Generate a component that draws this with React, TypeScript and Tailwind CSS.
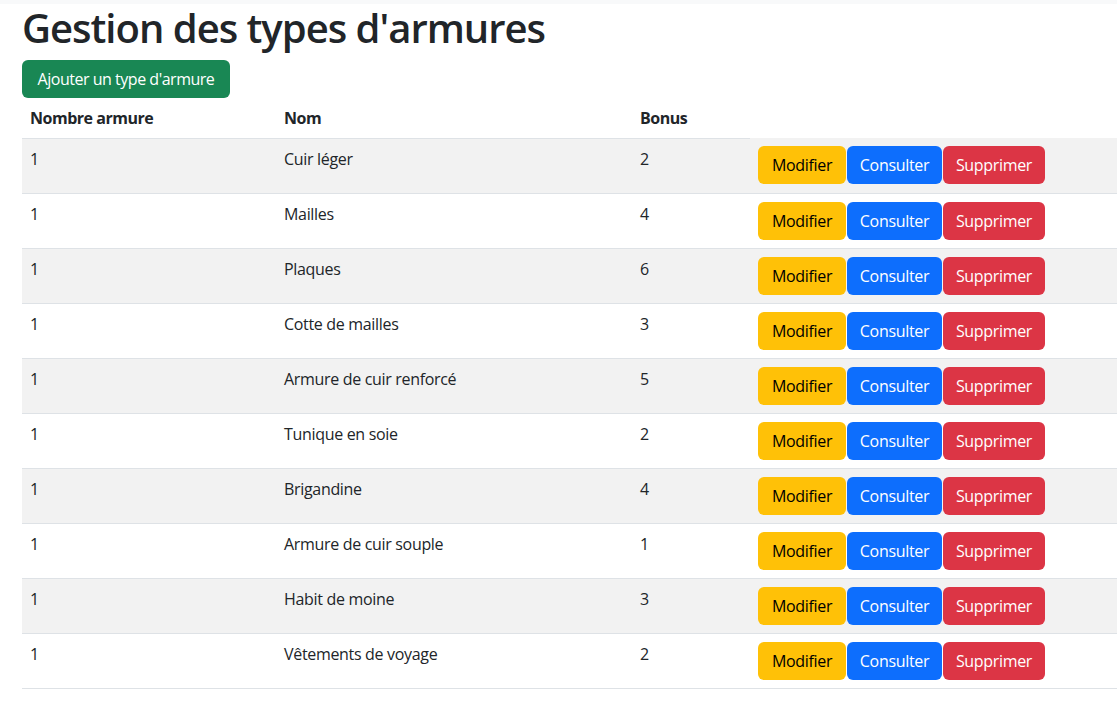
const rows = [
  { count: 1, name: 'Cuir léger', bonus: 2 },
  { count: 1, name: 'Mailles', bonus: 4 },
  { count: 1, name: 'Plaques', bonus: 6 },
  { count: 1, name: 'Cotte de mailles', bonus: 3 },
  { count: 1, name: 'Armure de cuir renforcé', bonus: 5 },
  { count: 1, name: 'Tunique en soie', bonus: 2 },
  { count: 1, name: 'Brigandine', bonus: 4 },
  { count: 1, name: 'Armure de cuir souple', bonus: 1 },
  { count: 1, name: 'Habit de moine', bonus: 3 },
  { count: 1, name: 'Vêtements de voyage', bonus: 2 },
]

export default function App() {
  return (
    <div className="min-h-screen bg-white font-['Open_Sans','Lato',sans-serif] text-base tracking-[-0.02em] text-[#212529]">
      <div className="h-1 bg-[#f8f9fa]" />
      <div className="pl-[22px]">
        <h1 className="mb-2 text-[40px] font-semibold leading-[48px] tracking-[-0.025em]">
          Gestion des types d'armures
        </h1>
        <button className="h-[38px] w-[208px] rounded-md bg-[#198754] tracking-[-0.03em] text-white">
          Ajouter un type d'armure
        </button>
        <table className="w-[1095px] table-fixed border-collapse text-left">
          <colgroup>
            <col className="w-[254px]" />
            <col className="w-[356px]" />
            <col className="w-[118px]" />
            <col className="w-[367px]" />
          </colgroup>
          <thead>
            <tr>
              <th className="h-10 border-b border-[#dee2e6] px-2 font-bold tracking-[-0.03em]">Nombre armure</th>
              <th className="h-10 border-b border-[#dee2e6] px-2 font-bold tracking-[-0.03em]">Nom</th>
              <th className="h-10 border-b border-[#dee2e6] px-2 font-bold tracking-[-0.03em]">Bonus</th>
            </tr>
          </thead>
          <tbody>
            {rows.map((r, i) => (
              <tr
                key={r.name}
                className={i % 2 === 0 ? 'bg-[#f2f2f2]' : 'bg-white'}
              >
                <td className="h-[55px] border-b border-[#dee2e6] px-2 pt-2 align-top">{r.count}</td>
                <td className="border-b border-[#dee2e6] px-2 pt-2 align-top">{r.name}</td>
                <td className="border-b border-[#dee2e6] px-2 pt-2 align-top">{r.bonus}</td>
                <td className="border-b border-[#dee2e6] px-2 align-middle">
                  <div className="flex gap-px">
                    <button className="h-[38px] w-[88px] rounded-md bg-[#ffc107] text-black">Modifier</button>
                    <button className="h-[38px] w-[95px] rounded-md bg-[#0d6efd] text-white">Consulter</button>
                    <button className="h-[38px] w-[102px] rounded-md bg-[#dc3545] text-white">Supprimer</button>
                  </div>
                </td>
              </tr>
            ))}
          </tbody>
        </table>
      </div>
    </div>
  )
}
